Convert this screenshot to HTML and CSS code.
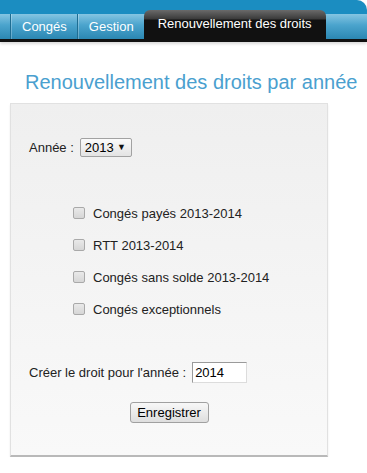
FILE: index.html
```html
<!DOCTYPE html>
<html lang="fr">
<head>
    <meta charset="UTF-8">
    <meta name="viewport" content="width=device-width, initial-scale=1.0">
    <title>Renouvellement des droits</title>
    <link rel="stylesheet" href="styles.css">
</head>
<body>

<div class="header">
    <ul class="tabs">
        <li class="tab">Congés</li>
        <li class="tab">Gestion</li>
        <li class="tab active">Renouvellement des droits</li>
    </ul>
</div>

<h2 class="title">Renouvellement des droits par année</h2>

<form class="box" onsubmit="return false">
    <div class="row-year">
        <label for="annee">Année :</label>
        <span class="select-wrap">
            <select id="annee" name="annee">
                <option>2013</option>
                <option>2012</option>
            </select>
        </span>
    </div>

    <div class="checks">
        <label class="check"><input type="checkbox" name="cp"> Congés payés 2013-2014</label>
        <label class="check"><input type="checkbox" name="rtt"> RTT 2013-2014</label>
        <label class="check"><input type="checkbox" name="css"> Congés sans solde 2013-2014</label>
        <label class="check"><input type="checkbox" name="ce"> Congés exceptionnels</label>
    </div>

    <div class="row-create">
        <label for="nouvelle">Créer le droit pour l'année :</label>
        <input type="text" id="nouvelle" name="nouvelle" value="2014">
    </div>

    <div class="actions">
        <button type="submit">Enregistrer</button>
    </div>
</form>

</body>
</html>
```

FILE: styles.css
```css
body {
    margin: 0;
    font-family: "Liberation Sans", Arial, sans-serif;
    font-size: 13px;
    color: #222;
    background: #fff;
}

/* Header */
.header {
    background-color: #1b8dc1;
    border-top-right-radius: 10px;
    padding-top: 10px;
    box-shadow: 0 2px 3px rgba(0, 0, 0, 0.15);
}
.tabs {
    display: flex;
    align-items: flex-end;
    height: 29px;
    margin: 0;
    padding: 0 0 0 10px;
    list-style: none;
    background: linear-gradient(to bottom, transparent 4px, #85c5e2 4px, #4ba4cd 15px, #2b87b2 29px);
    border-bottom: 3px solid #111;
}
.tab {
    height: 25px;
    line-height: 25px;
    padding: 0 10px 0 11px;
    color: #fff;
    border-left: 1px solid #1e6d92;
    box-shadow: inset 1px 0 rgba(255, 255, 255, 0.25);
}
.tab.active {
    height: 29px;
    line-height: 18px;
    padding: 5px 14px 0;
    box-sizing: border-box;
    border-left: none;
    border-radius: 6px 6px 0 0;
    background: linear-gradient(to bottom, #6a6a6a 0, #3a3a3a 9px, #111 10px, #111 100%);
    box-shadow: none;
}

/* Title */
.title {
    margin: 28px 0 9px 25px;
    font-size: 20px;
    line-height: 24px;
    font-weight: normal;
    color: #4aa0cf;
}

/* Form box */
.box {
    display: block;
    box-sizing: border-box;
    width: 318px;
    margin-left: 10px;
    padding: 34px 18px 32px;
    background: linear-gradient(to bottom, #efefef, #f9f9f9);
    border: 1px solid #e1e1e1;
    border-bottom: 2px solid #b9b9b9;
    box-shadow: 0 2px 2px rgba(0, 0, 0, 0.08);
}
.row-year {
    display: flex;
    align-items: center;
    gap: 6px;
    height: 19px;
}
.select-wrap {
    position: relative;
    display: inline-block;
}
.select-wrap select {
    appearance: none;
    -webkit-appearance: none;
    height: 19px;
    width: 52px;
    margin: 0;
    padding: 0 0 0 4px;
    font-family: inherit;
    font-size: 13px;
    color: #000;
    border: 1px solid #a2a2a2;
    border-radius: 2px;
    background: linear-gradient(to bottom, #fbfbfb, #e3e3e3);
}
.select-wrap::after {
    content: "\25BC";
    position: absolute;
    right: 6px;
    top: 4px;
    font-size: 9px;
    color: #111;
    pointer-events: none;
}

.checks {
    display: flex;
    flex-direction: column;
    gap: 12px;
    margin: 46px 0 0 44px;
}
.check {
    display: flex;
    align-items: center;
    height: 20px;
}
.check input {
    appearance: none;
    -webkit-appearance: none;
    box-sizing: border-box;
    width: 12px;
    height: 12px;
    margin: 0 8px 0 0;
    border: 1px solid #a9a9a9;
    border-radius: 2px;
    background: linear-gradient(to bottom, #e9e9e9, #d6d6d6);
}

.row-create {
    display: flex;
    align-items: center;
    gap: 6px;
    margin-top: 43px;
}
.row-create input {
    box-sizing: border-box;
    width: 55px;
    height: 21px;
    margin: 0;
    padding: 0 2px;
    font-family: inherit;
    font-size: 13px;
    color: #000;
    background: #fff;
    border: 1px solid;
    border-color: #9a9a9a #dcdcdc #dcdcdc #9a9a9a;
}

.actions {
    display: flex;
    justify-content: center;
    margin-top: 19px;
}
.actions button {
    width: 79px;
    height: 21px;
    padding: 0;
    font-family: inherit;
    font-size: 13px;
    color: #000;
    border: 1px solid #a0a0a0;
    border-radius: 3px;
    background: linear-gradient(to bottom, #f8f8f8, #dedede);
}
```
